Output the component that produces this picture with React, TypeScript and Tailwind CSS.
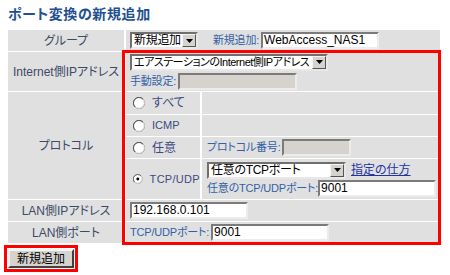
import React from "react";

function TextBox({ w, value, disabled }: { w: string; value?: string; disabled?: boolean }) {
  return (
    <div
      className={`h-[17px] ${w} ${disabled ? "bg-[#d6d3ce]" : "bg-white"} border-2 border-t-[#7b7b7b] border-l-[#7b7b7b] border-b-[#ececec] border-r-[#ececec] text-[12px] leading-[13px] px-[1px] text-black whitespace-nowrap overflow-hidden`}
    >
      {value}
    </div>
  );
}

function Arrow() {
  return (
    <span className="flex shrink-0 h-[13px] w-[14px] items-center justify-center bg-[#d6d3ce] border border-t-[#f4f4f4] border-l-[#f4f4f4] border-b-[#555] border-r-[#555]">
      <svg width="7" height="4" viewBox="0 0 7 4">
        <path d="M0 0H7L3.5 4Z" fill="#000" />
      </svg>
    </span>
  );
}

function Select({ w, value, tc }: { w: string; value: string; tc: string }) {
  return (
    <div
      className={`${w} h-[17px] flex items-center justify-between bg-white border-2 border-t-[#6f6f6f] border-l-[#6f6f6f] border-b-[#e8e8e8] border-r-[#e8e8e8] pl-[2px] leading-[13px] text-black`}
    >
      <span className={`whitespace-nowrap overflow-hidden ${tc}`}>{value}</span>
      <Arrow />
    </div>
  );
}

function Radio({ checked }: { checked?: boolean }) {
  return (
    <svg width="12" height="12" viewBox="0 0 12 12">
      <circle cx="6" cy="6" r="5.5" fill="#fff" stroke="#8a8a8a" />
      <path d="M2 10A5.5 5.5 0 0 1 10 2" stroke="#5a5a5a" fill="none" strokeWidth="1" />
      <path d="M10.3 2.7A5.5 5.5 0 0 1 2.7 10.3" stroke="#e8e8e8" fill="none" strokeWidth="1" />
      {checked && <circle cx="6" cy="6" r="1.8" fill="#000" />}
    </svg>
  );
}

const labelText = "text-[12px] text-[#3d4a66] whitespace-nowrap";
const smallBlue = "text-[11px] text-[#3360a6] whitespace-nowrap tracking-[-0.2px]";

export default function App() {
  return (
    <div className="relative w-[450px] h-[275px] bg-white px-[8px] pt-[6px] font-['Liberation_Sans','Noto_Sans_CJK_JP',sans-serif] [font-feature-settings:'palt']">
      <div className="h-[17px] text-[14px] leading-[17px] font-bold text-[#22508f] tracking-[0.6px]">
        ポート変換の新規追加
      </div>

      <div className="mt-[7px] w-[432px] flex flex-col gap-[1px] bg-white">
        {/* group */}
        <div className="grid grid-cols-[116px_1fr] gap-[2px] h-[21px]">
          <div className={`bg-[#e0e0e0] flex items-center justify-center ${labelText}`}>グループ</div>
          <div className="bg-[#e0e0e0] flex items-center pl-[4px]">
            <Select w="w-[68px]" value="新規追加" tc="text-[12px] tracking-[-0.3px]" />
            <span className={`${smallBlue} ml-[15px] mr-[2px]`}>新規追加:</span>
            <TextBox w="w-[118px]" value="WebAccess_NAS1" />
          </div>
        </div>

        {/* internet */}
        <div className="grid grid-cols-[116px_1fr] gap-[2px] h-[39px]">
          <div className={`bg-[#e0e0e0] flex items-center justify-center ${labelText}`}>Internet側IPアドレス</div>
          <div className="bg-[#e0e0e0] flex flex-col justify-center gap-[2px] pl-[4px]">
            <Select w="w-[198px]" value="エアステーションのInternet側IPアドレス" tc="text-[11px] tracking-[-0.5px]" />
            <div className="flex items-center">
              <span className={`${smallBlue} mr-[2px]`}>手動設定:</span>
              <TextBox w="w-[119px]" disabled />
            </div>
          </div>
        </div>

        {/* protocol */}
        <div className="grid grid-cols-[116px_1fr] gap-[2px] h-[107px]">
          <div className={`bg-[#e0e0e0] flex items-center justify-center ${labelText}`}>プロトコル</div>
          <div className="flex flex-col gap-[1px] bg-white">
            <div className="grid grid-cols-[74px_1fr] gap-[2px] h-[22px]">
              <div className="bg-[#e0e0e0] flex items-center pl-[7px] gap-[7px]">
                <Radio />
                <span className="text-[12px] text-[#3d4a80]">すべて</span>
              </div>
              <div className="bg-[#e0e0e0]" />
            </div>
            <div className="grid grid-cols-[74px_1fr] gap-[2px] h-[21px]">
              <div className="bg-[#e0e0e0] flex items-center pl-[7px] gap-[7px]">
                <Radio />
                <span className="text-[11px] text-[#3d4a80]">ICMP</span>
              </div>
              <div className="bg-[#e0e0e0]" />
            </div>
            <div className="grid grid-cols-[74px_1fr] gap-[2px] h-[21px]">
              <div className="bg-[#e0e0e0] flex items-center pl-[7px] gap-[7px]">
                <Radio />
                <span className="text-[12px] text-[#3d4a80]">任意</span>
              </div>
              <div className="bg-[#e0e0e0] flex items-center pl-[5px]">
                <span className={`${smallBlue} mr-[1px]`}>プロトコル番号:</span>
                <TextBox w="w-[69px]" disabled />
              </div>
            </div>
            <div className="grid grid-cols-[74px_1fr] gap-[2px] h-[40px]">
              <div className="bg-[#e0e0e0] flex items-center pl-[7px] gap-[7px]">
                <Radio checked />
                <span className="text-[11px] text-[#3d4a80] tracking-[0.3px]">TCP/UDP</span>
              </div>
              <div className="bg-[#e0e0e0] flex flex-col justify-center gap-[1px] pl-[5px]">
                <div className="flex items-center">
                  <Select w="w-[139px]" value="任意のTCPポート" tc="text-[12px] tracking-[-0.3px]" />
                  <a className="ml-[5px] text-[12px] leading-[14px] text-[#2233a0] underline">指定の仕方</a>
                </div>
                <div className="flex items-center">
                  <span className={`${smallBlue}`}>任意のTCP/UDPポート:</span>
                  <TextBox w="w-[118px]" value="9001" />
                </div>
              </div>
            </div>
          </div>
        </div>

        {/* LAN IP */}
        <div className="grid grid-cols-[116px_1fr] gap-[2px] h-[21px]">
          <div className={`bg-[#e0e0e0] flex items-center justify-center ${labelText}`}>LAN側IPアドレス</div>
          <div className="bg-[#e0e0e0] flex items-center pl-[4px]">
            <TextBox w="w-[118px]" value="192.168.0.101" />
          </div>
        </div>

        {/* LAN port */}
        <div className="grid grid-cols-[116px_1fr] gap-[2px] h-[21px]">
          <div className={`bg-[#e0e0e0] flex items-center justify-center ${labelText}`}>LAN側ポート</div>
          <div className="bg-[#e0e0e0] flex items-center pl-[4px]">
            <span className={`${smallBlue} mr-[2px]`}>TCP/UDPポート:</span>
            <TextBox w="w-[118px]" value="9001" />
          </div>
        </div>
      </div>

      <div className="mt-[2px] -ml-[4px] inline-flex border-[3px] border-[#ff0000] p-[1px]">
        <button className="h-[19px] w-[66px] bg-[#d6d3ce] border-2 border-t-[#f4f4f4] border-l-[#f4f4f4] border-b-[#404040] border-r-[#404040] text-[12px] leading-[14px] text-black">
          新規追加
        </button>
      </div>

      <div className="absolute left-[122px] top-[50px] w-[319px] h-[195px] border-[3px] border-[#ff0000] pointer-events-none" />
    </div>
  );
}
